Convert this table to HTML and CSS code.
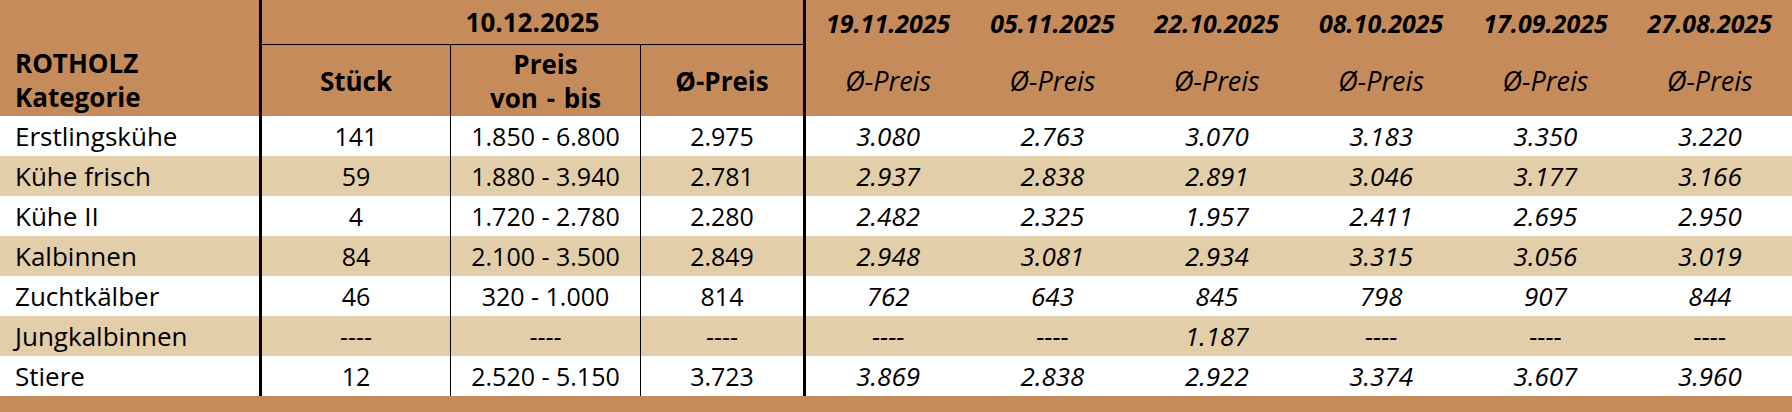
FILE: index.html
```html
<!DOCTYPE html>
<html lang="de">
<head>
<meta charset="utf-8">
<title>Rotholz</title>
<link rel="stylesheet" href="styles.css">
</head>
<body>
<div class="sheet">
  <div class="head">
    <div class="hcell cat"><span>ROTHOLZ</span><span>Kategorie</span></div>
    <div class="hcell curdate">10.12.2025</div>
    <div class="hcell date">19.11.2025</div>
    <div class="hcell date">05.11.2025</div>
    <div class="hcell date">22.10.2025</div>
    <div class="hcell date">08.10.2025</div>
    <div class="hcell date">17.09.2025</div>
    <div class="hcell date">27.08.2025</div>
    <div class="hcell sub thin">Stück</div>
    <div class="hcell sub thin two"><span>Preis</span><span>von - bis</span></div>
    <div class="hcell sub thick">Ø-Preis</div>
    <div class="hcell avg">Ø-Preis</div>
    <div class="hcell avg">Ø-Preis</div>
    <div class="hcell avg">Ø-Preis</div>
    <div class="hcell avg">Ø-Preis</div>
    <div class="hcell avg">Ø-Preis</div>
    <div class="hcell avg">Ø-Preis</div>
  </div>

  <div class="row">
    <div class="c name">Erstlingskühe</div><div class="c thin">141</div><div class="c thin">1.850 - 6.800</div><div class="c thick">2.975</div>
    <div class="c it">3.080</div><div class="c it">2.763</div><div class="c it">3.070</div><div class="c it">3.183</div><div class="c it">3.350</div><div class="c it">3.220</div>
  </div>
  <div class="row alt">
    <div class="c name">Kühe frisch</div><div class="c thin">59</div><div class="c thin">1.880 - 3.940</div><div class="c thick">2.781</div>
    <div class="c it">2.937</div><div class="c it">2.838</div><div class="c it">2.891</div><div class="c it">3.046</div><div class="c it">3.177</div><div class="c it">3.166</div>
  </div>
  <div class="row">
    <div class="c name">Kühe II</div><div class="c thin">4</div><div class="c thin">1.720 - 2.780</div><div class="c thick">2.280</div>
    <div class="c it">2.482</div><div class="c it">2.325</div><div class="c it">1.957</div><div class="c it">2.411</div><div class="c it">2.695</div><div class="c it">2.950</div>
  </div>
  <div class="row alt">
    <div class="c name">Kalbinnen</div><div class="c thin">84</div><div class="c thin">2.100 - 3.500</div><div class="c thick">2.849</div>
    <div class="c it">2.948</div><div class="c it">3.081</div><div class="c it">2.934</div><div class="c it">3.315</div><div class="c it">3.056</div><div class="c it">3.019</div>
  </div>
  <div class="row">
    <div class="c name">Zuchtkälber</div><div class="c thin">46</div><div class="c thin">320 - 1.000</div><div class="c thick">814</div>
    <div class="c it">762</div><div class="c it">643</div><div class="c it">845</div><div class="c it">798</div><div class="c it">907</div><div class="c it">844</div>
  </div>
  <div class="row alt">
    <div class="c name">Jungkalbinnen</div><div class="c thin">----</div><div class="c thin">----</div><div class="c thick">----</div>
    <div class="c it">----</div><div class="c it">----</div><div class="c it">1.187</div><div class="c it">----</div><div class="c it">----</div><div class="c it">----</div>
  </div>
  <div class="row">
    <div class="c name">Stiere</div><div class="c thin">12</div><div class="c thin">2.520 - 5.150</div><div class="c thick">3.723</div>
    <div class="c it">3.869</div><div class="c it">2.838</div><div class="c it">2.922</div><div class="c it">3.374</div><div class="c it">3.607</div><div class="c it">3.960</div>
  </div>
  <div class="foot"></div>
</div>
</body>
</html>
```

FILE: styles.css
```css
* { box-sizing: border-box; }
html, body {
  margin: 0;
  padding: 0;
  background: #c58b5a;
}
body {
  font-family: "Open Sans", "Noto Sans", sans-serif;
  color: #000;
}
.sheet {
  width: 1792px;
}
.head, .row {
  display: grid;
  grid-template-columns: 262px 189px 190px 165px repeat(6, 1fr);
}
.head {
  grid-template-rows: 45px 71px;
  background: #c58b5a;
}
.hcell {
  display: flex;
  align-items: center;
  justify-content: center;
  font-size: 26px;
  white-space: nowrap;
}
.cat {
  grid-row: 1 / 3;
  grid-column: 1;
  flex-direction: column;
  align-items: flex-start;
  justify-content: flex-end;
  padding: 0 0 2px 15px;
  border-right: 3px solid #000;
  font-weight: 700;
  line-height: 34px;
}
.curdate {
  grid-column: 2 / 5;
  grid-row: 1;
  font-weight: 700;
  border-bottom: 1px solid #000;
  border-right: 3px solid #000;
}
.date {
  grid-row: 1;
  font-weight: 700;
  font-style: italic;
  font-size: 25px;
}
.sub {
  grid-row: 2;
  font-weight: 700;
}
.two {
  flex-direction: column;
  line-height: 34px;
  word-spacing: 2px;
}
.avg {
  grid-row: 2;
  font-style: italic;
  font-size: 27px;
}
.thin { border-right: 1px solid #000; }
.thick { border-right: 3px solid #000; }
.row {
  height: 40px;
  background: #fff;
}
.row.alt { background: #e3ceaa; }
.c {
  display: flex;
  align-items: center;
  justify-content: center;
  font-size: 25px;
  white-space: nowrap;
}
.c.name {
  justify-content: flex-start;
  padding-left: 15px;
  border-right: 3px solid #000;
  font-size: 26px;
}
.c.it { font-style: italic; font-size: 26px; }
.foot {
  height: 16px;
  background: #c58b5a;
}
```
